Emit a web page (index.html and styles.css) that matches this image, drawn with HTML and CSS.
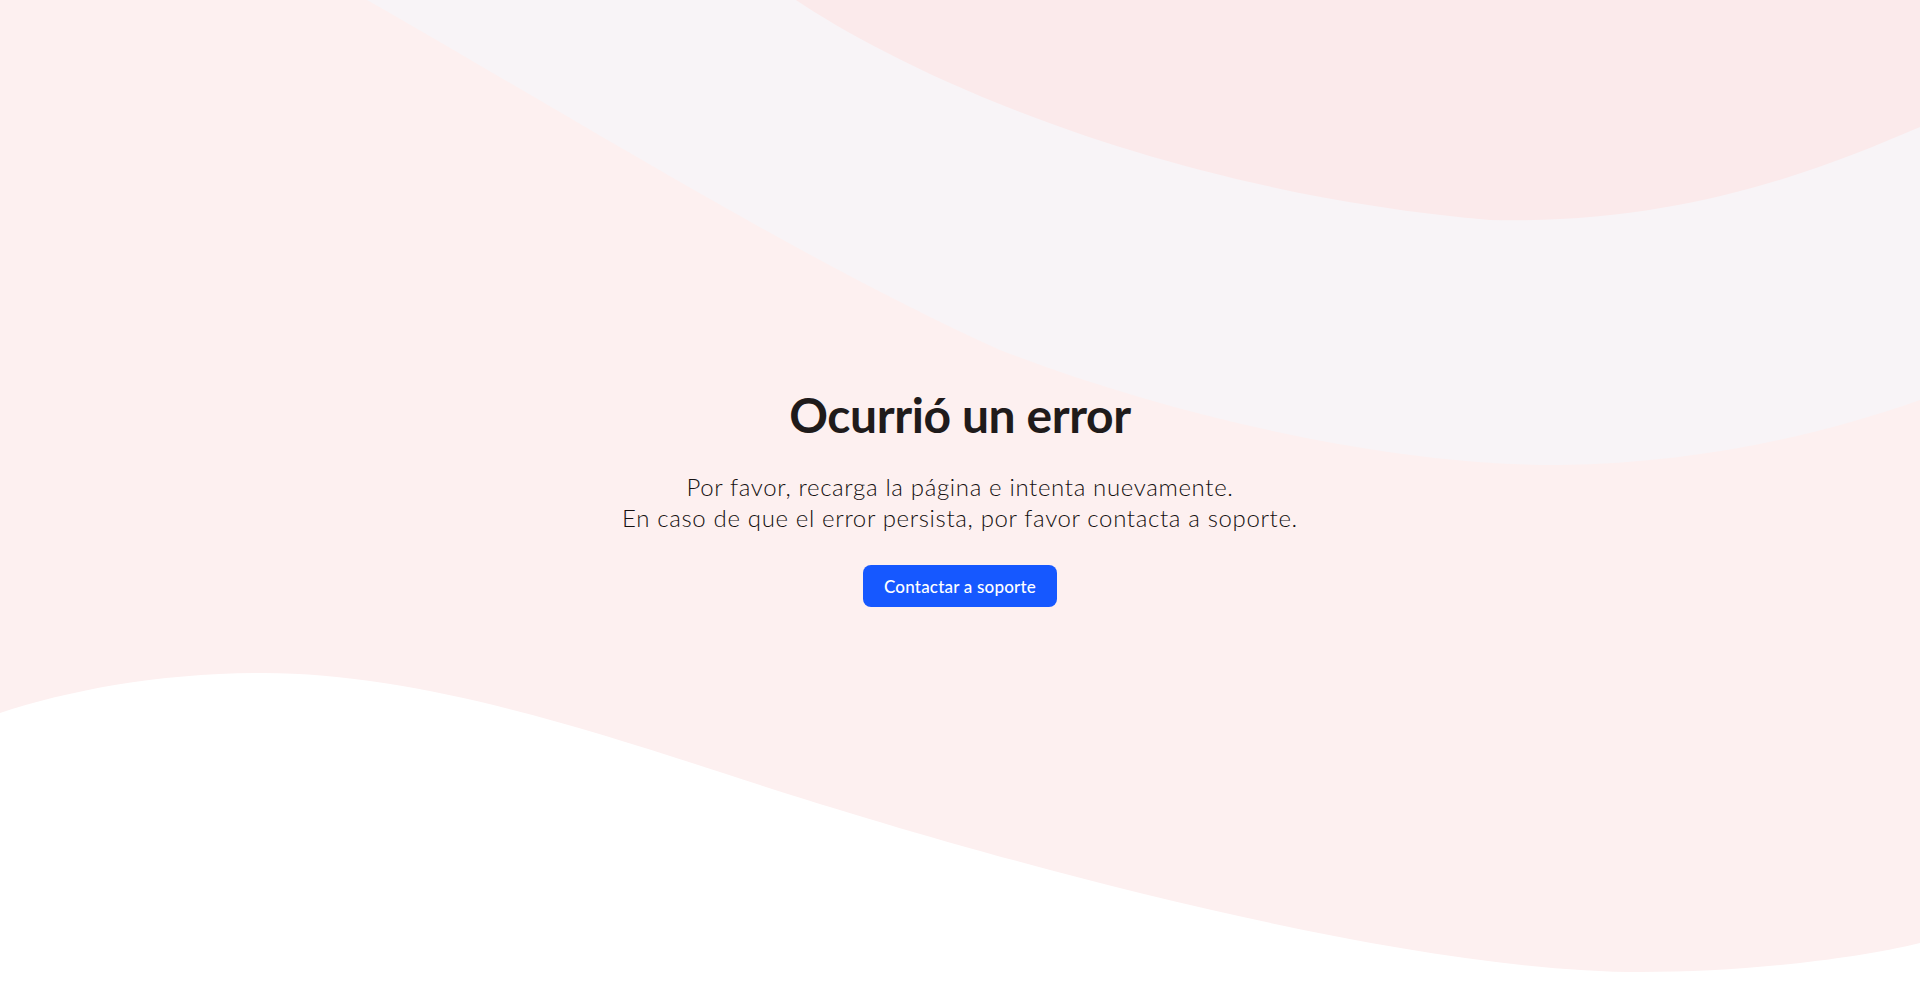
FILE: index.html
```html
<!DOCTYPE html>
<html>
<head>
    <title>Ocurrió un error</title>
    <meta name="viewport" content="width=device-width, initial-scale=1">
    <link rel="stylesheet" href="styles.css">
</head>
<body>
    <div class="page">
        <svg class="waves" viewBox="0 0 1920 993" preserveAspectRatio="none" aria-hidden="true">
            <rect width="1920" height="993" fill="#fdf0f0"/>
            <path fill="#f8f4f7" d="M367 0 C 560 110, 800 260, 1000 350 C 1180 420, 1400 466, 1560 465 C 1700 463, 1820 435, 1920 400 L 1920 0 Z"/>
            <path fill="#fbeaeb" d="M796 0 C 900 70, 1150 190, 1490 220 C 1680 225, 1820 170, 1920 127 L 1920 0 Z"/>
            <path fill="#ffffff" d="M0 713 C 70 690, 160 673, 263 673 C 430 673, 620 740, 760 785 C 1000 862, 1400 972, 1641 972 C 1740 972, 1850 960, 1920 943 L 1920 993 L 0 993 Z"/>
        </svg>

        <main class="error-box">
            <h1>Ocurrió un error</h1>
            <p>Por favor, recarga la página e intenta nuevamente.<br>
            En caso de que el error persista, por favor contacta a soporte.</p>
            <button type="button">Contactar a soporte</button>
        </main>
    </div>
</body>
</html>
```

FILE: styles.css
```css
html, body {
    margin: 0;
    padding: 0;
    height: 100%;
}
body {
    font-family: Lato, "Noto Sans", sans-serif;
    color: #1f1b1b;
    background-color: #fdf0f0;
    overflow: hidden;
}
.page {
    position: relative;
    min-height: 100vh;
    display: flex;
    align-items: center;
    justify-content: center;
}
.waves {
    position: absolute;
    top: 0;
    left: 0;
    width: 100%;
    height: 100%;
    z-index: 0;
}
.error-box {
    position: relative;
    z-index: 1;
    display: flex;
    flex-direction: column;
    align-items: center;
    text-align: center;
}
h1 {
    margin: 0 0 28px;
    font-size: 48px;
    line-height: 1.2;
    font-weight: 700;
    letter-spacing: -0.4px;
}
p {
    margin: 0 0 32px;
    font-size: 24px;
    line-height: 31px;
    font-weight: 300;
    letter-spacing: 0.65px;
    color: #151111;
}
button {
    background-color: #1658ff;
    color: white;
    font-family: inherit;
    font-size: 17px;
    font-weight: 500;
    letter-spacing: 0.2px;
    height: 42px;
    padding: 0 21px;
    border: none;
    border-radius: 8px;
    cursor: pointer;
}
button:hover {
    background-color: #0f4be0;
}
```
